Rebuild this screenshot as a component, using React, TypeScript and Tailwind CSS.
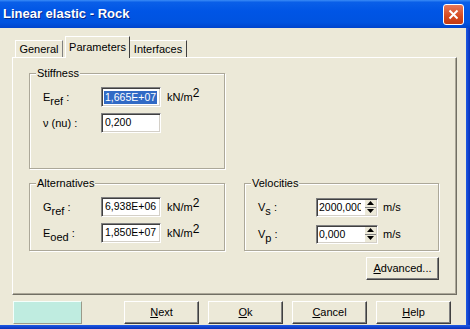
const sunken =
  "border border-t-[#808080] border-l-[#808080] border-r-white border-b-white shadow-[inset_1px_1px_0_#404040,inset_-1px_-1px_0_#d4d0c8]";
const raised =
  "border border-t-white border-l-white border-r-[#404040] border-b-[#404040] shadow-[inset_-1px_-1px_0_#808080]";
const group =
  "border border-[#aca899] shadow-[1px_1px_0_#ffffff,inset_1px_1px_0_#ffffff] px-[6px] pt-[7px]";

function Label({ main, sub }: { main: string; sub?: string }) {
  return (
    <div className="w-[65px] shrink-0 pl-[7px] whitespace-nowrap">
      {main}
      {sub && <span className="relative top-[4px]">{sub}</span>}
      {" :"}
    </div>
  );
}

function Field({
  main,
  sub,
  value,
  selected,
}: {
  main: string;
  sub?: string;
  value: string;
  selected?: boolean;
}) {
  return (
    <div className="flex h-[20px] items-center">
      <Label main={main} sub={sub} />
      <div className={`flex h-[20px] w-[60px] items-center bg-white pl-[2px] text-[10.5px] ${sunken}`}>
        <span className={selected ? "bg-[#316ac5] px-px leading-[13px] text-white" : "px-px"}>
          {value}
        </span>
      </div>
      {sub !== undefined && (
        <span className="ml-[6px] whitespace-nowrap">
          kN/m<span className="relative -top-[4px] text-[12px]">2</span>
        </span>
      )}
    </div>
  );
}

function Spin({ main, sub, value }: { main: string; sub: string; value: string }) {
  return (
    <div className="flex h-[20px] items-center">
      <Label main={main} sub={sub} />
      <div className={`flex h-[19px] w-[62px] items-stretch bg-white ${sunken}`}>
        <div className="mr-[4px] flex-1 overflow-hidden pl-[2px] text-[10.5px] leading-[17px] whitespace-nowrap">
          {value}
        </div>
        <div className="my-px mr-px flex w-[11px] flex-col bg-[#ece9d8]">
          <div className="flex flex-1 items-center justify-center">
            <svg width="7" height="4" viewBox="0 0 7 4">
              <path d="M3.5 0 L7 4 L0 4 Z" fill="#000" />
            </svg>
          </div>
          <div className="h-px bg-[#808080]" />
          <div className="flex flex-1 items-center justify-center">
            <svg width="7" height="4" viewBox="0 0 7 4">
              <path d="M0 0 L7 0 L3.5 4 Z" fill="#000" />
            </svg>
          </div>
        </div>
      </div>
      <span className="ml-[5px]">m/s</span>
    </div>
  );
}

function Button({ children, w = "w-[75px]" }: { children: React.ReactNode; w?: string }) {
  return (
    <div className={`flex h-[23px] ${w} items-center justify-center bg-[#ece9d8] ${raised}`}>
      {children}
    </div>
  );
}

export default function App() {
  return (
    <div className="flex h-[329px] w-[470px] flex-col overflow-hidden bg-[#ece9d8] font-['Liberation_Sans',Arial,sans-serif] text-[11px] text-black">
      <div className="flex h-[28px] shrink-0 items-center justify-between bg-[linear-gradient(to_bottom,#3a8cf7_0%,#0a5fe8_8%,#0055e5_40%,#0053e0_80%,#0044cc_100%)] pl-[3px] pr-[6px]">
        <span className="text-[13px] font-bold text-white [text-shadow:1px_1px_0_#0a2a8a]">
          Linear elastic - Rock
        </span>
        <div className="flex h-[21px] w-[21px] items-center justify-center rounded-[3px] border border-white bg-[linear-gradient(to_bottom,#e8785a,#d5491f_60%,#c43a12)]">
          <svg width="11" height="11" viewBox="0 0 11 11">
            <path d="M1.5 1.5 L9.5 9.5 M9.5 1.5 L1.5 9.5" stroke="#fff" strokeWidth="2" />
          </svg>
        </div>
      </div>

      <div className="flex flex-1">
        <div className="flex flex-1 flex-col pl-[12px] pt-[8px]">
          <div className="ml-[3px] flex h-[21px] items-end">
            <div className="flex h-[17px] w-[48px] items-center justify-center border-t border-l border-r border-t-white border-l-white border-r-[#808080] pt-px">
              General
            </div>
            <div className="relative z-10 -mb-px ml-[2px] flex h-[22px] w-[65px] items-start justify-center border-t border-l border-r border-t-white border-l-white border-r-[#404040] bg-[#ece9d8] pt-[2px]">
              Parameters
            </div>
            <div className="flex h-[17px] w-[57px] items-center justify-center border-t border-r border-t-white border-r-[#404040] pt-px">
              Interfaces
            </div>
          </div>

          <div className="flex h-[238px] w-[445px] flex-col border border-t-white border-l-white border-r-[#716f64] border-b-[#716f64] pl-[16px] pt-[9px] shadow-[inset_-1px_-1px_0_#aca899]">
            <fieldset className={`h-[102px] w-[196px] ${group}`}>
              <legend className="bg-[#ece9d8] px-px leading-[13px]">Stiffness</legend>
              <div className="flex flex-col gap-[6px]">
                <Field main="E" sub="ref" value="1,665E+07" selected />
                <Field main="ν (nu)" value="0,200" />
              </div>
            </fieldset>

            <div className="mt-[8px] flex items-start">
              <fieldset className={`h-[74px] w-[196px] ${group}`}>
                <legend className="bg-[#ece9d8] px-px leading-[13px]">Alternatives</legend>
                <div className="flex flex-col gap-[6px]">
                  <Field main="G" sub="ref" value="6,938E+06" />
                  <Field main="E" sub="oed" value="1,850E+07" />
                </div>
              </fieldset>
              <div className="ml-[19px] flex flex-col">
                <fieldset className={`h-[74px] w-[195px] ${group}`}>
                  <legend className="bg-[#ece9d8] px-px leading-[13px]">Velocities</legend>
                  <div className="flex flex-col gap-[7px]">
                    <Spin main="V" sub="s" value="2000,000" />
                    <Spin main="V" sub="p" value="0,000" />
                  </div>
                </fieldset>
                <div className="mt-[6px] self-end">
                  <Button w="w-[73px]">
                    <span>
                      <span className="underline">A</span>dvanced...
                    </span>
                  </Button>
                </div>
              </div>
            </div>
          </div>

          <div className="mt-[6px] flex items-center">
            <div className="ml-px h-[23px] w-[69px] border border-t-[#f4fffb] border-l-[#f4fffb] border-r-[#9a9a8a] border-b-[#9a9a8a] bg-[#bfece0]" />
            <div className="ml-[42px] flex gap-[9px]">
              <Button>
                <span>
                  <span className="underline">N</span>ext
                </span>
              </Button>
              <Button>
                <span>
                  <span className="underline">O</span>k
                </span>
              </Button>
              <Button>
                <span>
                  <span className="underline">C</span>ancel
                </span>
              </Button>
              <Button>
                <span>
                  <span className="underline">H</span>elp
                </span>
              </Button>
            </div>
          </div>
        </div>
        <div className="w-[4px] shrink-0 bg-[linear-gradient(to_right,#1d5ae6,#0830b8)]" />
      </div>
      <div className="h-[4px] shrink-0 bg-[linear-gradient(to_bottom,#1d5ae6,#0830b8)]" />
    </div>
  );
}
